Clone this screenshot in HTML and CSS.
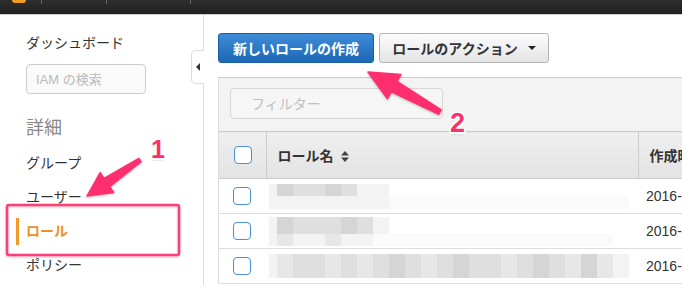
FILE: index.html
```html
<!DOCTYPE html>
<html lang="ja">
<head>
    <meta charset="UTF-8">
    <meta name="viewport" content="width=device-width, initial-scale=1.0">
    <title>IAM - ロール</title>
    <link rel="stylesheet" href="styles.css">
</head>
<body>
    <header class="topbar">
        <span class="logo"></span>
        <span class="sep sep-1"></span>
        <span class="sep sep-2"></span>
        <span class="sep sep-3"></span>
    </header>

    <div class="layout">
        <aside class="sidebar">
            <div class="nav-link">ダッシュボード</div>
            <input type="text" class="side-search" placeholder="IAM の検索">
            <div class="section-title">詳細</div>
            <ul class="nav">
                <li>グループ</li>
                <li>ユーザー</li>
                <li class="active">ロール</li>
                <li>ポリシー</li>
            </ul>
            <div class="collapse-tab"><span class="tri-left"></span></div>
        </aside>

        <main class="content">
            <div class="toolbar">
                <button class="btn btn-primary">新しいロールの作成</button>
                <button class="btn btn-default">ロールのアクション <span class="caret"></span></button>
            </div>

            <div class="panel">
                <div class="filter-bar">
                    <input type="text" class="filter-input" placeholder="フィルター">
                </div>
                <table class="grid">
                    <thead>
                        <tr>
                            <th class="col-check"><span class="checkbox"></span></th>
                            <th class="col-name">ロール名
                                <svg class="sort" width="8" height="11" viewBox="0 0 8 11">
                                    <path d="M4 0 L8 4.5 L0 4.5 Z M0 6.5 L8 6.5 L4 11 Z" fill="#444"/>
                                </svg>
                            </th>
                            <th class="col-date">作成時刻</th>
                        </tr>
                    </thead>
                    <tbody>
                        <tr>
                            <td class="col-check"><span class="checkbox"></span></td>
                            <td class="col-name">
                                <div class="blur">
                                    <div class="strip strip-a">
                                        <span class="px s1 w8"></span><span class="px s4"></span><span class="px s3"></span><span class="px s3"></span><span class="px s4"></span><span class="px s3"></span><span class="px s1 w32"></span>
                                    </div>
                                    <div class="strip strip-b">
                                        <span class="px s1 w8"></span><span class="px s1"></span><span class="px s1"></span><span class="px s1"></span><span class="px s1 w64"></span><span class="px s0 w240"></span>
                                    </div>
                                </div>
                            </td>
                            <td class="col-date">2016-03-22</td>
                        </tr>
                        <tr>
                            <td class="col-check"><span class="checkbox"></span></td>
                            <td class="col-name">
                                <div class="blur">
                                    <div class="strip strip-c">
                                        <span class="px s1 w8"></span><span class="px s4"></span><span class="px s3"></span><span class="px s3"></span><span class="px s3"></span><span class="px s4"></span><span class="px s3"></span><span class="px s1"></span>
                                    </div>
                                    <div class="strip strip-d">
                                        <span class="px s1 w8"></span><span class="px s2"></span><span class="px s1"></span><span class="px s1"></span><span class="px s2"></span><span class="px s1"></span><span class="px s1"></span><span class="px s0 w240"></span>
                                    </div>
                                </div>
                            </td>
                            <td class="col-date">2016-03-22</td>
                        </tr>
                        <tr>
                            <td class="col-check"><span class="checkbox"></span></td>
                            <td class="col-name">
                                <div class="blur">
                                    <div class="strip strip-e">
                                        <span class="px s1 w8"></span><span class="px s2"></span><span class="px s3"></span><span class="px s3"></span><span class="px s2"></span><span class="px s3"></span><span class="px s2"></span><span class="px s3"></span><span class="px s4"></span><span class="px s3"></span><span class="px s2"></span><span class="px s3"></span><span class="px s4"></span><span class="px s3"></span><span class="px s3"></span><span class="px s2"></span><span class="px s3"></span><span class="px s4"></span><span class="px s3"></span><span class="px s2"></span><span class="px s4"></span><span class="px s2"></span><span class="px s1"></span>
                                    </div>
                                </div>
                            </td>
                            <td class="col-date">2016-03-22</td>
                        </tr>
                    </tbody>
                </table>
            </div>
        </main>
    </div>

    <!-- 注釈 (矢印・番号・枠) -->
    <svg class="annotations" width="682" height="285" viewBox="0 0 682 285">
        <defs>
            <filter id="shadow" x="-20%" y="-20%" width="140%" height="140%">
                <feDropShadow dx="0" dy="1" stdDeviation="1" flood-color="#000" flood-opacity="0.25"/>
            </filter>
        </defs>
        <rect x="7" y="205" width="172" height="50" rx="2" fill="none" stroke="#ff3d78" stroke-width="2.5" filter="url(#shadow)"/>
        <polygon points="87,196 113.6,192.4 109.7,186.6 141.1,161.7 138.9,158.3 104.1,178.4 100.2,172.6"
                 fill="#ff2f6e" stroke="#ff2f6e" stroke-linejoin="round" stroke-width="1.5" filter="url(#shadow)"/>
        <polygon points="368,72 401,74.4 397.1,81.4 441.2,109.8 438.8,114.2 391.3,91.8 387.4,98.8"
                 fill="#ff2f6e" stroke="#ff2f6e" stroke-linejoin="round" stroke-width="1.5" filter="url(#shadow)"/>
    </svg>
    <span class="num num-1">1</span>
    <span class="num num-2">2</span>
</body>
</html>
```
FILE: styles.css
```css
* {
    margin: 0;
    padding: 0;
    box-sizing: border-box;
}

body {
    width: 682px;
    height: 285px;
    overflow: hidden;
    background: white;
    font-family: "Liberation Sans", "Noto Sans CJK JP", sans-serif;
    color: #333;
    position: relative;
}

/* 上部バー */
.topbar {
    height: 15px;
    background: linear-gradient(#2e2e2e, #202020);
    border-bottom: 1px solid #cfcfcf;
    position: relative;
}

.logo {
    position: absolute;
    left: 12px;
    top: 0;
    width: 14px;
    height: 3px;
    background: #f39c1f;
    border-radius: 0 0 6px 6px;
}

.sep {
    position: absolute;
    top: 0;
    width: 1px;
    height: 4px;
    background: #666;
}

.sep-1 { left: 41px; }
.sep-2 { left: 106px; }
.sep-3 { left: 190px; }

.layout {
    display: flex;
    height: 270px;
}

/* サイドバー */
.sidebar {
    width: 204px;
    flex-shrink: 0;
    border-right: 1px solid #ddd;
    padding: 18px 0 0 26px;
    position: relative;
}

.nav-link {
    font-size: 14px;
    line-height: 20px;
    height: 20px;
}

.side-search {
    display: block;
    margin-top: 11px;
    width: 120px;
    height: 30px;
    border: 1px solid #ccc;
    border-radius: 4px;
    background: #fafafa;
    padding: 0 9px;
    font-family: inherit;
    font-size: 13px;
    outline: none;
}

.side-search::placeholder {
    color: #bbb;
}

.section-title {
    margin-top: 22px;
    font-size: 18px;
    line-height: 24px;
    color: #888;
    margin-bottom: 6px;
}

.nav {
    list-style: none;
}

.nav li {
    height: 34px;
    line-height: 34px;
    font-size: 14px;
    position: relative;
}

.nav li.active {
    color: #f0901c;
    font-weight: bold;
}

.nav li.active::before {
    content: "";
    position: absolute;
    left: -10px;
    top: 4px;
    width: 3px;
    height: 27px;
    background: #f39a26;
}

.collapse-tab {
    position: absolute;
    right: -1px;
    top: 35px;
    width: 13px;
    height: 34px;
    background: white;
    border: 1px solid #ddd;
    border-right: none;
    border-radius: 5px 0 0 5px;
    display: flex;
    align-items: center;
    justify-content: center;
}

.tri-left {
    width: 0;
    height: 0;
    border-top: 4px solid transparent;
    border-bottom: 4px solid transparent;
    border-right: 4px solid #333;
}

/* メイン */
.content {
    flex: 1;
    min-width: 0;
    padding: 18px 0 0 14px;
    overflow: hidden;
}

.toolbar {
    display: flex;
    gap: 5px;
    height: 30px;
}

.btn {
    height: 30px;
    border-radius: 3px;
    font-family: inherit;
    font-size: 14px;
    font-weight: bold;
    cursor: pointer;
}

.btn-primary {
    width: 156px;
    color: white;
    background: linear-gradient(#3e8bd8, #1d68b6);
    border: 1px solid #1a5fa6;
}

.btn-default {
    width: 170px;
    color: #333;
    background: linear-gradient(#fbfbfb, #e4e4e4);
    border: 1px solid #b5b5b5;
    display: flex;
    align-items: center;
    justify-content: center;
    gap: 10px;
}

.caret {
    width: 0;
    height: 0;
    border-left: 4px solid transparent;
    border-right: 4px solid transparent;
    border-top: 4px solid #222;
}

.panel {
    margin-top: 14px;
    border-top: 1px solid #ccc;
    border-left: 1px solid #ddd;
    background: #f3f3f3;
    width: 560px;
}

.filter-bar {
    padding: 10px 0 12px 11px;
}

.filter-input {
    display: block;
    width: 213px;
    height: 31px;
    border: 1px solid #d6d6d6;
    border-radius: 4px;
    background: #f6f6f6;
    padding: 0 20px;
    font-family: inherit;
    font-size: 14px;
    outline: none;
}

.filter-input::placeholder {
    color: #c0c0c0;
}

/* テーブル */
.grid {
    border-collapse: collapse;
    width: 560px;
    table-layout: fixed;
    background: white;
}

.grid th {
    height: 47px;
    background: linear-gradient(#efefef, #e3e3e3);
    border-top: 1px solid #ccc;
    border-bottom: 1px solid #ccc;
    border-left: 1px solid #ccc;
    text-align: left;
    font-size: 14px;
    font-weight: bold;
    color: #333;
    white-space: nowrap;
}

.grid th:first-child {
    border-left: none;
}

.grid td {
    height: 35px;
    border-bottom: 1px solid #ddd;
    font-size: 14px;
    white-space: nowrap;
    overflow: hidden;
}

.grid tbody tr:last-child td {
    border-bottom-color: #d3e2ef;
}

.col-check {
    width: 47px;
    padding-left: 14px;
}

.grid th.col-check {
    padding-left: 15px;
}

.grid th.col-name {
    width: 372px;
    padding-left: 11px;
}

.grid td.col-name {
    padding-left: 3px;
}

.grid th.col-date {
    padding-left: 11px;
}

.grid td.col-date {
    padding-left: 8px;
    color: #333;
}

.sort {
    vertical-align: -1px;
    margin-left: 4px;
}

.checkbox {
    display: block;
    width: 18px;
    height: 18px;
    border: 1.5px solid #4a8fd8;
    border-radius: 4px;
    background: white;
}

/* ぼかし */
.blur {
    display: flex;
    flex-direction: column;
}

.strip {
    display: flex;
}

.strip-a { height: 12px; }
.strip-b { height: 13px; }
.strip-c { height: 17px; }
.strip-d { height: 12px; }
.strip-e { height: 24px; }

.px {
    display: block;
    width: 16px;
    height: 100%;
}

.w8 { width: 8px; }
.w32 { width: 32px; }
.w64 { width: 64px; }
.w240 { width: 240px; }

.s0 { background: #fafafa; }
.s1 { background: #f3f3f3; }
.s2 { background: #e7e7e7; }
.s3 { background: #dfdfdf; }
.s4 { background: #d5d5d5; }

/* 注釈 */
.annotations {
    position: absolute;
    left: 0;
    top: 0;
    pointer-events: none;
}

.num {
    position: absolute;
    font-family: "Liberation Sans", sans-serif;
    font-weight: bold;
    color: #ff2f6e;
    line-height: 1;
    text-shadow:
        -1.5px -1.5px 0 white, 1.5px -1.5px 0 white,
        -1.5px 1.5px 0 white, 1.5px 1.5px 0 white,
        0 2px 2px rgba(0, 0, 0, 0.3);
}

.num-1 {
    left: 151px;
    top: 137px;
    font-size: 25px;
}

.num-2 {
    left: 450px;
    top: 110px;
    font-size: 27px;
}
```
